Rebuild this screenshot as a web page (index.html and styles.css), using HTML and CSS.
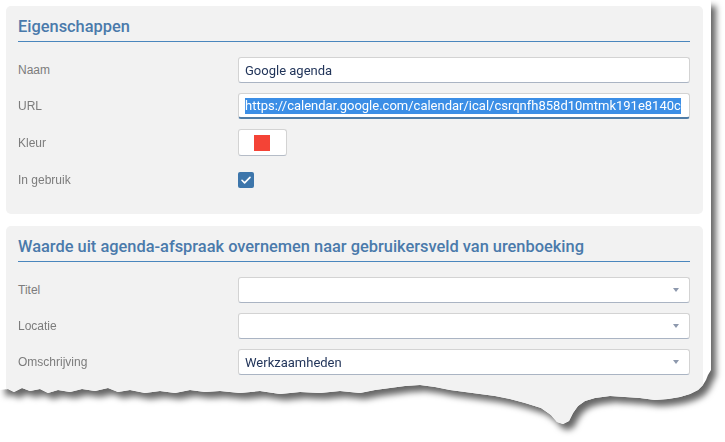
FILE: index.html
```html
<!DOCTYPE html>
<html lang="nl">
<head>
<meta charset="utf-8">
<title>Eigenschappen</title>
<link rel="stylesheet" href="styles.css">
</head>
<body>
<div class="shot">
  <div class="page">
    <section class="panel">
      <h2 class="panel-title">Eigenschappen</h2>
      <div class="rows">
        <div class="row">
          <span class="label">Naam</span>
          <div class="field"><span class="value">Google agenda</span></div>
        </div>
        <div class="row">
          <span class="label">URL</span>
          <div class="field focused"><span class="value selected">https://calendar.google.com/calendar/ical/csrqnfh858d10mtmk191e8140c</span></div>
        </div>
        <div class="row">
          <span class="label">Kleur</span>
          <div class="color-btn"><span class="swatch"></span></div>
        </div>
        <div class="row check-row">
          <span class="label">In gebruik</span>
          <span class="checkbox">
            <svg width="16" height="16" viewBox="0 0 16 16"><path d="M4 8.3l2.6 2.6L12 5.4" fill="none" stroke="#fff" stroke-width="1.6" stroke-linecap="round" stroke-linejoin="round"/></svg>
          </span>
        </div>
      </div>
    </section>
    <section class="panel panel-last">
      <h2 class="panel-title">Waarde uit agenda-afspraak overnemen naar gebruikersveld van urenboeking</h2>
      <div class="rows">
        <div class="row">
          <span class="label">Titel</span>
          <div class="field select"><span class="value"></span><span class="caret"></span></div>
        </div>
        <div class="row">
          <span class="label">Locatie</span>
          <div class="field select"><span class="value"></span><span class="caret"></span></div>
        </div>
        <div class="row">
          <span class="label">Omschrijving</span>
          <div class="field select"><span class="value">Werkzaamheden</span><span class="caret"></span></div>
        </div>
      </div>
    </section>
  </div>
</div>
</body>
</html>
```
FILE: styles.css
```css
* { box-sizing: border-box; }
html, body { margin: 0; padding: 0; background: #fff; }
body { width: 725px; height: 442px; overflow: hidden; font-family: Roboto, "Liberation Sans", sans-serif; }

.shot {
  width: 725px;
  height: 442px;
  filter: drop-shadow(5px 6px 3px rgba(0,0,0,0.6));
}
.page {
  width: 711px;
  height: 436px;
  background: #fff;
  padding: 6px 8px 0 6px;
  display: flex;
  flex-direction: column;
  gap: 12px;
  clip-path: polygon(0 0, 711px 0, 711px 370px, 708px 375px, 706px 380px, 703px 385px, 698px 390px, 690px 394px, 680px 397px, 668px 399px, 655px 400px, 640px 398px, 625px 397px, 610px 396px, 595px 398px, 585px 401px, 578px 406px, 573px 413px, 569px 421px, 563px 424px, 557px 422px, 551px 415px, 541px 408px, 525px 403px, 510px 399px, 495px 396px, 480px 394px, 465px 392px, 450px 390px, 435px 387px, 420px 385px, 405px 386px, 390px 388px, 375px 390px, 360px 393px, 340px 391px, 320px 393px, 300px 392px, 280px 394px, 260px 391px, 240px 393px, 220px 391px, 205px 392px, 190px 390px, 175px 393px, 160px 391px, 145px 393px, 130px 390px, 118px 392px, 108px 388px, 95px 391px, 82px 389px, 70px 392px, 58px 390px, 48px 393px, 40px 389px, 30px 391px, 22px 388px, 14px 392px, 8px 389px, 0 390px);
}

.panel {
  background: #f2f2f2;
  border-radius: 5px;
  padding: 0 13px 21px 12px;
}
.panel-last { flex: 1; }

.panel-title {
  margin: 0;
  padding: 11px 0 4px;
  font-size: 16.4px;
  line-height: 20px;
  font-weight: 500;
  color: #4a7aab;
  border-bottom: 1px solid #4a86bd;
}

.rows {
  display: flex;
  flex-direction: column;
  gap: 10px;
  margin-top: 15px;
}
.row {
  display: grid;
  grid-template-columns: 220px 1fr;
  align-items: center;
  min-height: 26px;
}
.label {
  font-family: "Liberation Sans", Arial, sans-serif;
  font-size: 12px;
  color: #7c7c7c;
}
.field {
  height: 26px;
  background: #fff;
  border: 1px solid #d3d3d3;
  border-bottom-color: #aab4c3;
  border-radius: 3px;
  padding: 0 6px;
  display: flex;
  align-items: center;
  overflow: hidden;
}
.value {
  font-size: 13px;
  color: #22355a;
  white-space: nowrap;
}
.focused {
  border-bottom: 2px solid #4f7ca6;
  padding-top: 1px;
}
.selected {
  background: #3b8ee6;
  color: #fff;
  line-height: 16px;
}
.select { justify-content: space-between; padding-right: 10px; }
.caret {
  width: 0;
  height: 0;
  border-left: 3.5px solid transparent;
  border-right: 3.5px solid transparent;
  border-top: 4px solid #8d98ad;
}

.color-btn {
  width: 49px;
  height: 27px;
  background: #fff;
  border: 1px solid #d3d3d3;
  border-bottom-color: #b5bcc7;
  border-radius: 3px;
  display: flex;
  align-items: center;
  justify-content: center;
}
.swatch {
  width: 16px;
  height: 16px;
  background: #f44336;
  margin-right: 1px;
}
.check-row { margin-top: 1px; }
.checkbox {
  width: 16px;
  height: 16px;
  background: #3d76ab;
  border-radius: 2px;
  display: block;
}
.checkbox svg { display: block; }
```
